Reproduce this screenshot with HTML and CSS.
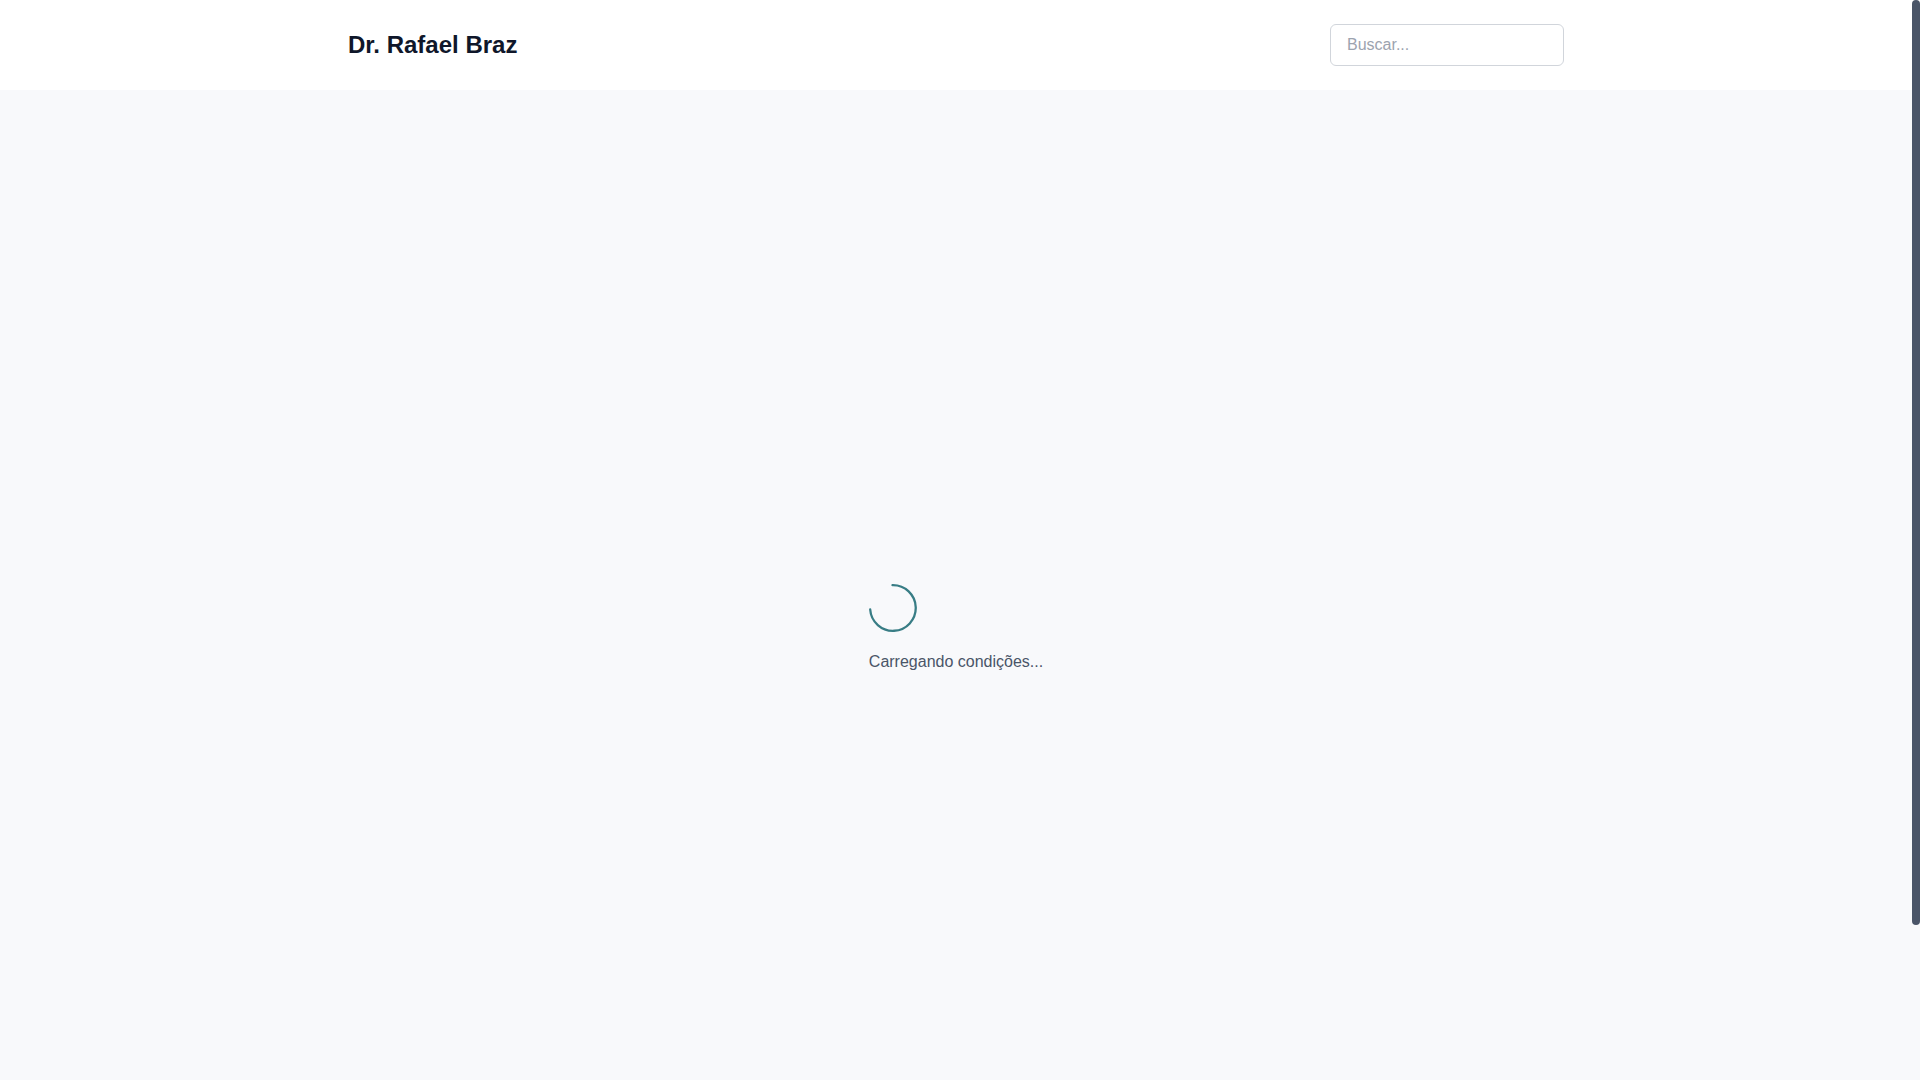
FILE: index.html
```
<!DOCTYPE html>
<html lang="pt-BR">
<head>
  <meta charset="UTF-8">
  <meta name="viewport" content="width=device-width, initial-scale=1.0">
  <title>Dr. Rafael Braz</title>
  <link rel="stylesheet" href="styles.css">
</head>
<body>
  <header class="header">
    <div class="header-inner">
      <h1 class="brand">Dr. Rafael Braz</h1>
      <input class="search" type="search" placeholder="Buscar..." aria-label="Buscar">
    </div>
  </header>
  <main class="main">
    <div class="loading" role="status">
      <svg class="spinner" viewBox="0 0 48 48" fill="none" aria-hidden="true">
        <path d="M23.5 1.2A22.8 22.8 0 1 1 1.2 25.5" stroke="#387d85" stroke-width="2.3" stroke-linecap="round"/>
      </svg>
      <p class="loading-text">Carregando condições...</p>
    </div>
  </main>
  <div class="scroll-thumb" aria-hidden="true"></div>
</body>
</html>
```

FILE: styles.css
```
* {
  box-sizing: border-box;
  margin: 0;
  padding: 0;
}
body {
  min-height: 100vh;
  display: flex;
  flex-direction: column;
  background: #f8f9fb;
  color: #0f172a;
  font-family: "Liberation Sans", Arial, sans-serif;
  font-size: 16px;
  line-height: 24px;
}
.header {
  background: #fff;
  padding-right: 8px;
}
.header-inner {
  max-width: 1280px;
  margin: 0 auto;
  padding: 24px 32px;
  display: flex;
  align-items: center;
  justify-content: space-between;
}
.brand {
  font-size: 24px;
  line-height: 32px;
  font-weight: 700;
}
.search {
  width: 234px;
  padding: 8px 16px;
  border: 1px solid #d1d5db;
  border-radius: 6px;
  background: #fff;
  color: inherit;
  font: inherit;
  appearance: none;
}
.search::placeholder {
  color: #9ca3af;
}
.main {
  flex: 1;
  padding: 90px 8px 0 0;
  display: flex;
  align-items: center;
  justify-content: center;
}
.spinner {
  display: block;
  width: 48px;
  height: 48px;
  margin-bottom: 16px;
}
.loading-text {
  color: #4a5568;
  line-height: 28px;
}
.scroll-thumb {
  position: fixed;
  top: 0;
  right: 0;
  width: 8px;
  height: 925px;
  border-radius: 4px;
  background: #4a5568;
}
```
